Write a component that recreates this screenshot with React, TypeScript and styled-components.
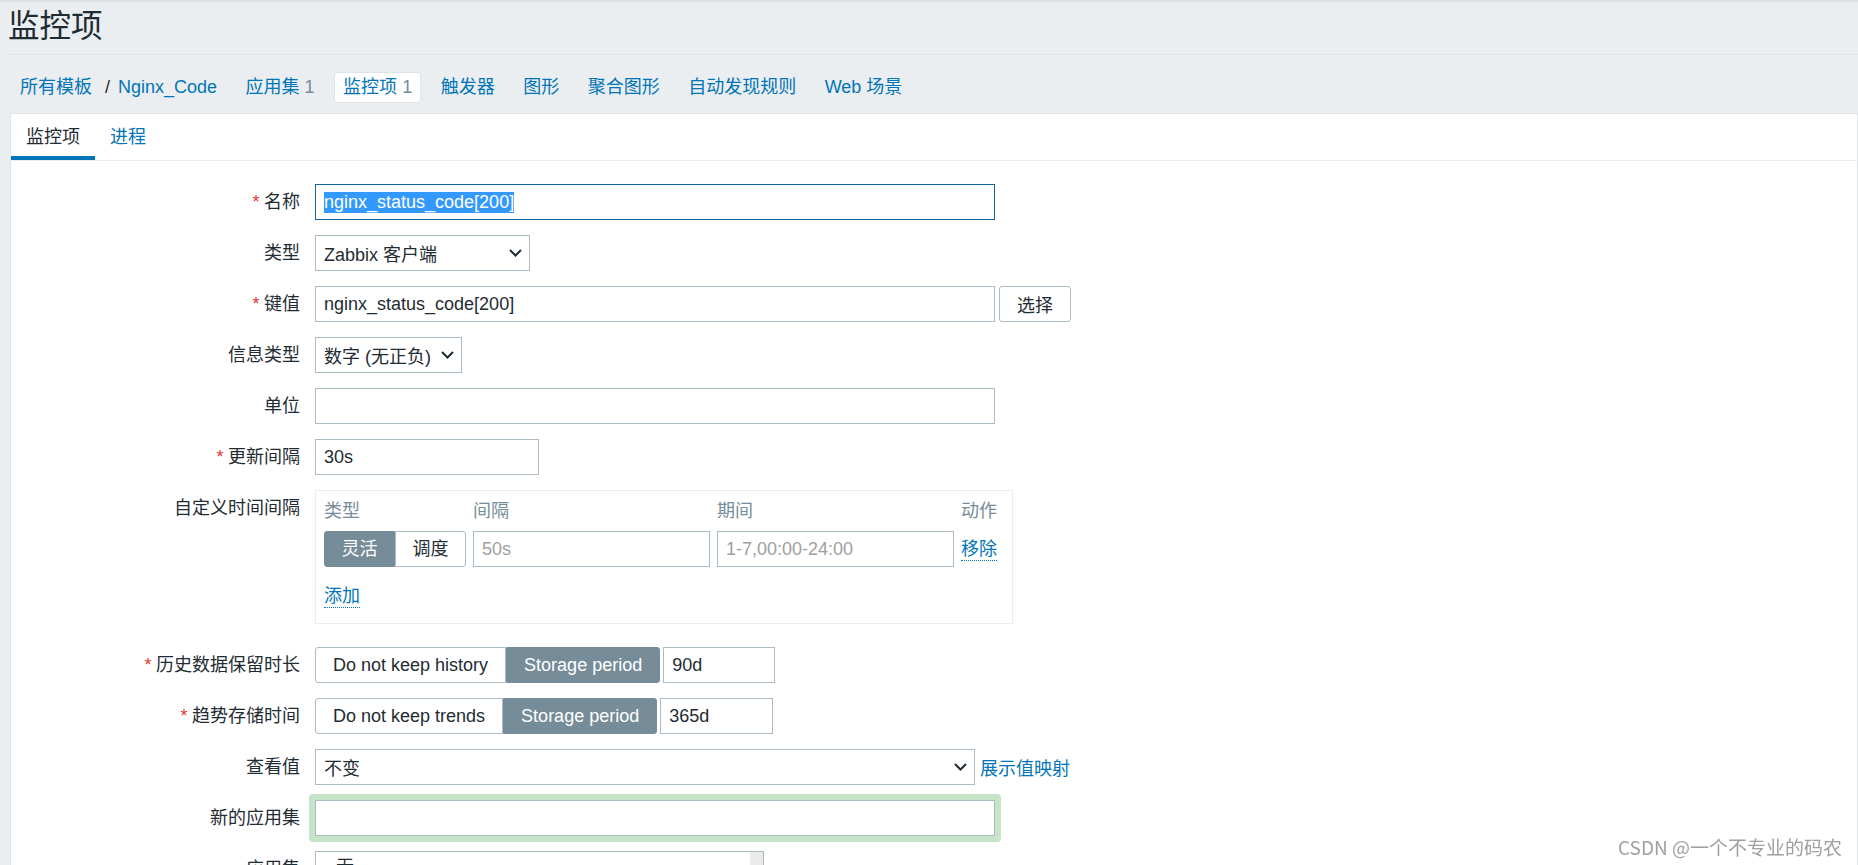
import { FC, ReactNode } from 'react';
import styled, { createGlobalStyle } from 'styled-components';

const GlobalStyle = createGlobalStyle`
  * {
    box-sizing: border-box;
  }

  html,
  body {
    margin: 0;
    padding: 0;
    overflow: hidden;
    background: #ebeef0;
  }

  body {
    font-family: 'Liberation Sans', 'Noto Sans CJK SC', Arial, sans-serif;
    font-size: 18px;
    color: #1f2c33;
  }
`;

const Page = styled.div`
  min-height: 100vh;
  border-top: 2px solid #dcdfe3;
`;

const Header = styled.header`
  margin-left: 8px;
  border-bottom: 1px solid #dfe4e7;
`;

const Title = styled.h1`
  margin: 0;
  padding: 5px 0 9px;
  font-size: 31.5px;
  font-weight: normal;
  line-height: 38px;
  color: #1f2c33;
`;

const ObjectNav = styled.nav`
  display: flex;
  align-items: center;
  padding: 17px 0 10px 11px;
`;

const NavItem = styled.div<{ $selected?: boolean }>`
  display: flex;
  align-items: center;
  margin-right: 10.5px;
  padding: 0 8px;
  line-height: 29px;
  white-space: pre;
  border: 1px solid ${(p) => (p.$selected ? '#dfe4e7' : 'transparent')};
  border-radius: 3px;
  background: ${(p) => (p.$selected ? '#ffffff' : 'transparent')};
`;

const NavLink = styled.a`
  color: #0275b8;
  text-decoration: none;
`;

const Separator = styled.span`
  margin: 0 8px 0 13px;
  color: #1f2c33;
`;

const Count = styled.span`
  color: #768d99;
`;

const Panel = styled.main`
  margin-left: 10px;
  background: #ffffff;
  border: 1px solid #dfe4e7;
`;

const TabsRow = styled.div`
  display: flex;
  border-bottom: 1px solid #ebeef0;
`;

const Tab = styled.div<{ $active?: boolean }>`
  padding: 4px 15px 0;
  line-height: 38px;
  color: ${(p) => (p.$active ? '#1f2c33' : '#0275b8')};
  border-bottom: 4px solid ${(p) => (p.$active ? '#0275b8' : 'transparent')};
`;

const Form = styled.div`
  display: grid;
  grid-template-columns: 289px 1fr;
  column-gap: 15px;
  row-gap: 15px;
  align-items: start;
  padding: 23px 0 60px;
`;

const Label = styled.label`
  text-align: right;
  line-height: 36px;
  white-space: nowrap;
`;

const Asterisk = styled.span`
  margin-right: 4.5px;
  color: #e33734;
`;

const Field = styled.div`
  display: flex;
  align-items: center;
  justify-self: start;
`;

const TextInput = styled.input<{ $w: number }>`
  width: ${(p) => p.$w}px;
  height: 36px;
  margin: 0;
  padding: 0 8px;
  border: 1px solid #acbbc4;
  border-radius: 0;
  outline: none;
  background: #ffffff;
  font: inherit;
  color: #1f2c33;

  &::placeholder {
    color: #a0a0a0;
  }
`;

const FocusedInput = styled.div`
  display: flex;
  align-items: center;
  width: 680px;
  height: 36px;
  padding: 0 8px;
  border: 1px solid #1565a0;
  background: #ffffff;
`;

const Selection = styled.span`
  line-height: 21px;
  background: #3399ff;
  color: #ffffff;
`;

const SelectBox = styled.div<{ $w: number }>`
  display: flex;
  align-items: center;
  justify-content: space-between;
  width: ${(p) => p.$w}px;
  height: 36px;
  padding: 0 7px 0 8px;
  border: 1px solid #acbbc4;
  background: #ffffff;
  white-space: nowrap;
`;

const Button = styled.button`
  height: 36px;
  margin-left: 4px;
  padding: 0 17px;
  border: 1px solid #acbbc4;
  border-radius: 3px;
  background: #ffffff;
  font: inherit;
  color: #1f2c33;
`;

const LinkAction = styled.a`
  display: inline-block;
  line-height: 22px;
  color: #0275b8;
  text-decoration: none;
  border-bottom: 1px dotted #0275b8;
`;

const SideLink = styled.a`
  margin-left: 5px;
  color: #0275b8;
  text-decoration: none;
  white-space: nowrap;
`;

const IntervalBox = styled.div`
  width: 698px;
  margin-bottom: 8px;
  padding: 6px 0 15px 8px;
  border: 1px solid #ebeef0;
`;

const IntervalGrid = styled.div`
  display: grid;
  grid-template-columns: 142px 237px 237px auto;
  column-gap: 7px;
  row-gap: 6px;
  align-items: center;
`;

const ColHead = styled.div`
  line-height: 28px;
  color: #768d99;
`;

const AddRow = styled.div`
  margin-top: 18px;
`;

const RadioGroup = styled.div<{ $w?: number }>`
  display: flex;
  width: ${(p) => (p.$w ? `${p.$w}px` : 'auto')};
`;

const RadioButton = styled.span<{ $active?: boolean; $stretch?: boolean }>`
  flex: ${(p) => (p.$stretch ? '1' : 'none')};
  height: 36px;
  padding: ${(p) => (p.$stretch ? '0' : '0 17px')};
  line-height: 34px;
  text-align: center;
  white-space: nowrap;
  border: 1px solid ${(p) => (p.$active ? '#768d99' : '#acbbc4')};
  background: ${(p) => (p.$active ? '#768d99' : '#ffffff')};
  color: ${(p) => (p.$active ? '#ffffff' : '#1f2c33')};

  &:first-child {
    border-radius: 3px 0 0 3px;
  }

  &:last-child {
    border-radius: 0 3px 3px 0;
  }
`;

const NewAppGlow = styled.div`
  margin: -6px;
  padding: 6px;
  border-radius: 4px;
  background: #c6e4c8;
`;

const ListBox = styled.div`
  display: flex;
  width: 449px;
  height: 160px;
  border: 1px solid #acbbc4;
  background: #ffffff;
`;

const ListOptions = styled.div`
  flex: 1;
  padding: 2px 0 0 14px;
  line-height: 27px;
`;

const ScrollTrack = styled.div`
  width: 13px;
  background: #ebebeb;
`;

const Watermark = styled.div`
  position: fixed;
  right: 16px;
  bottom: 6px;
  font-family: 'Noto Sans CJK SC', sans-serif;
  font-size: 19px;
  line-height: 24px;
  color: #a0a0a0;
  pointer-events: none;
`;

const Chevron: FC = () => (
  <svg width="13" height="8" viewBox="0 0 13 8">
    <path d="M1 1l5.5 5.5L12 1" fill="none" stroke="#1f2c33" strokeWidth="2" />
  </svg>
);

const Select: FC<{ width: number; children: ReactNode }> = ({ width, children }) => (
  <SelectBox $w={width}>
    <span>{children}</span>
    <Chevron />
  </SelectBox>
);

const FormLabel: FC<{ required?: boolean; children: ReactNode }> = ({ required, children }) => (
  <Label>
    {required && <Asterisk>*</Asterisk>}
    {children}
  </Label>
);

const navItems: [string, string?][] = [
  ['应用集', '1'],
  ['监控项', '1'],
  ['触发器'],
  ['图形'],
  ['聚合图形'],
  ['自动发现规则'],
  ['Web 场景'],
];

const App: FC = () => (
  <Page>
    <GlobalStyle />
    <Header>
      <Title>监控项</Title>
    </Header>

    <ObjectNav>
      <NavItem>
        <NavLink href="#">所有模板</NavLink>
        <Separator>/</Separator>
        <NavLink href="#">Nginx_Code</NavLink>
      </NavItem>
      {navItems.map(([text, count]) => (
        <NavItem key={text} $selected={text === '监控项'}>
          <NavLink href="#">{text}</NavLink>
          {count && <Count> {count}</Count>}
        </NavItem>
      ))}
    </ObjectNav>

    <Panel>
      <TabsRow>
        <Tab $active>监控项</Tab>
        <Tab>进程</Tab>
      </TabsRow>

      <Form>
        <FormLabel required>名称</FormLabel>
        <Field>
          <FocusedInput>
            <Selection>nginx_status_code[200]</Selection>
          </FocusedInput>
        </Field>

        <FormLabel>类型</FormLabel>
        <Field>
          <Select width={215}>Zabbix 客户端</Select>
        </Field>

        <FormLabel required>键值</FormLabel>
        <Field>
          <TextInput $w={680} value="nginx_status_code[200]" readOnly />
          <Button>选择</Button>
        </Field>

        <FormLabel>信息类型</FormLabel>
        <Field>
          <Select width={147}>数字 (无正负)</Select>
        </Field>

        <FormLabel>单位</FormLabel>
        <Field>
          <TextInput $w={680} value="" readOnly />
        </Field>

        <FormLabel required>更新间隔</FormLabel>
        <Field>
          <TextInput $w={224} value="30s" readOnly />
        </Field>

        <FormLabel>自定义时间间隔</FormLabel>
        <Field>
          <IntervalBox>
            <IntervalGrid>
              <ColHead>类型</ColHead>
              <ColHead>间隔</ColHead>
              <ColHead>期间</ColHead>
              <ColHead>动作</ColHead>

              <RadioGroup $w={142}>
                <RadioButton $active $stretch>灵活</RadioButton>
                <RadioButton $stretch>调度</RadioButton>
              </RadioGroup>
              <TextInput $w={237} placeholder="50s" readOnly />
              <TextInput $w={237} placeholder="1-7,00:00-24:00" readOnly />
              <div>
                <LinkAction href="#">移除</LinkAction>
              </div>
            </IntervalGrid>
            <AddRow>
              <LinkAction href="#">添加</LinkAction>
            </AddRow>
          </IntervalBox>
        </Field>

        <FormLabel required>历史数据保留时长</FormLabel>
        <Field>
          <RadioGroup>
            <RadioButton>Do not keep history</RadioButton>
            <RadioButton $active>Storage period</RadioButton>
          </RadioGroup>
          <TextInput $w={112} value="90d" readOnly style={{ marginLeft: 3 }} />
        </Field>

        <FormLabel required>趋势存储时间</FormLabel>
        <Field>
          <RadioGroup>
            <RadioButton>Do not keep trends</RadioButton>
            <RadioButton $active>Storage period</RadioButton>
          </RadioGroup>
          <TextInput $w={113} value="365d" readOnly style={{ marginLeft: 3 }} />
        </Field>

        <FormLabel>查看值</FormLabel>
        <Field>
          <Select width={660}>不变</Select>
          <SideLink href="#">展示值映射</SideLink>
        </Field>

        <FormLabel>新的应用集</FormLabel>
        <Field>
          <NewAppGlow>
            <TextInput $w={680} value="" readOnly />
          </NewAppGlow>
        </Field>

        <FormLabel>应用集</FormLabel>
        <Field>
          <ListBox>
            <ListOptions>
              <div>-无-</div>
              <div>Nginx</div>
            </ListOptions>
            <ScrollTrack />
          </ListBox>
        </Field>
      </Form>
    </Panel>

    <Watermark>CSDN @一个不专业的码农</Watermark>
  </Page>
);

export default App;
